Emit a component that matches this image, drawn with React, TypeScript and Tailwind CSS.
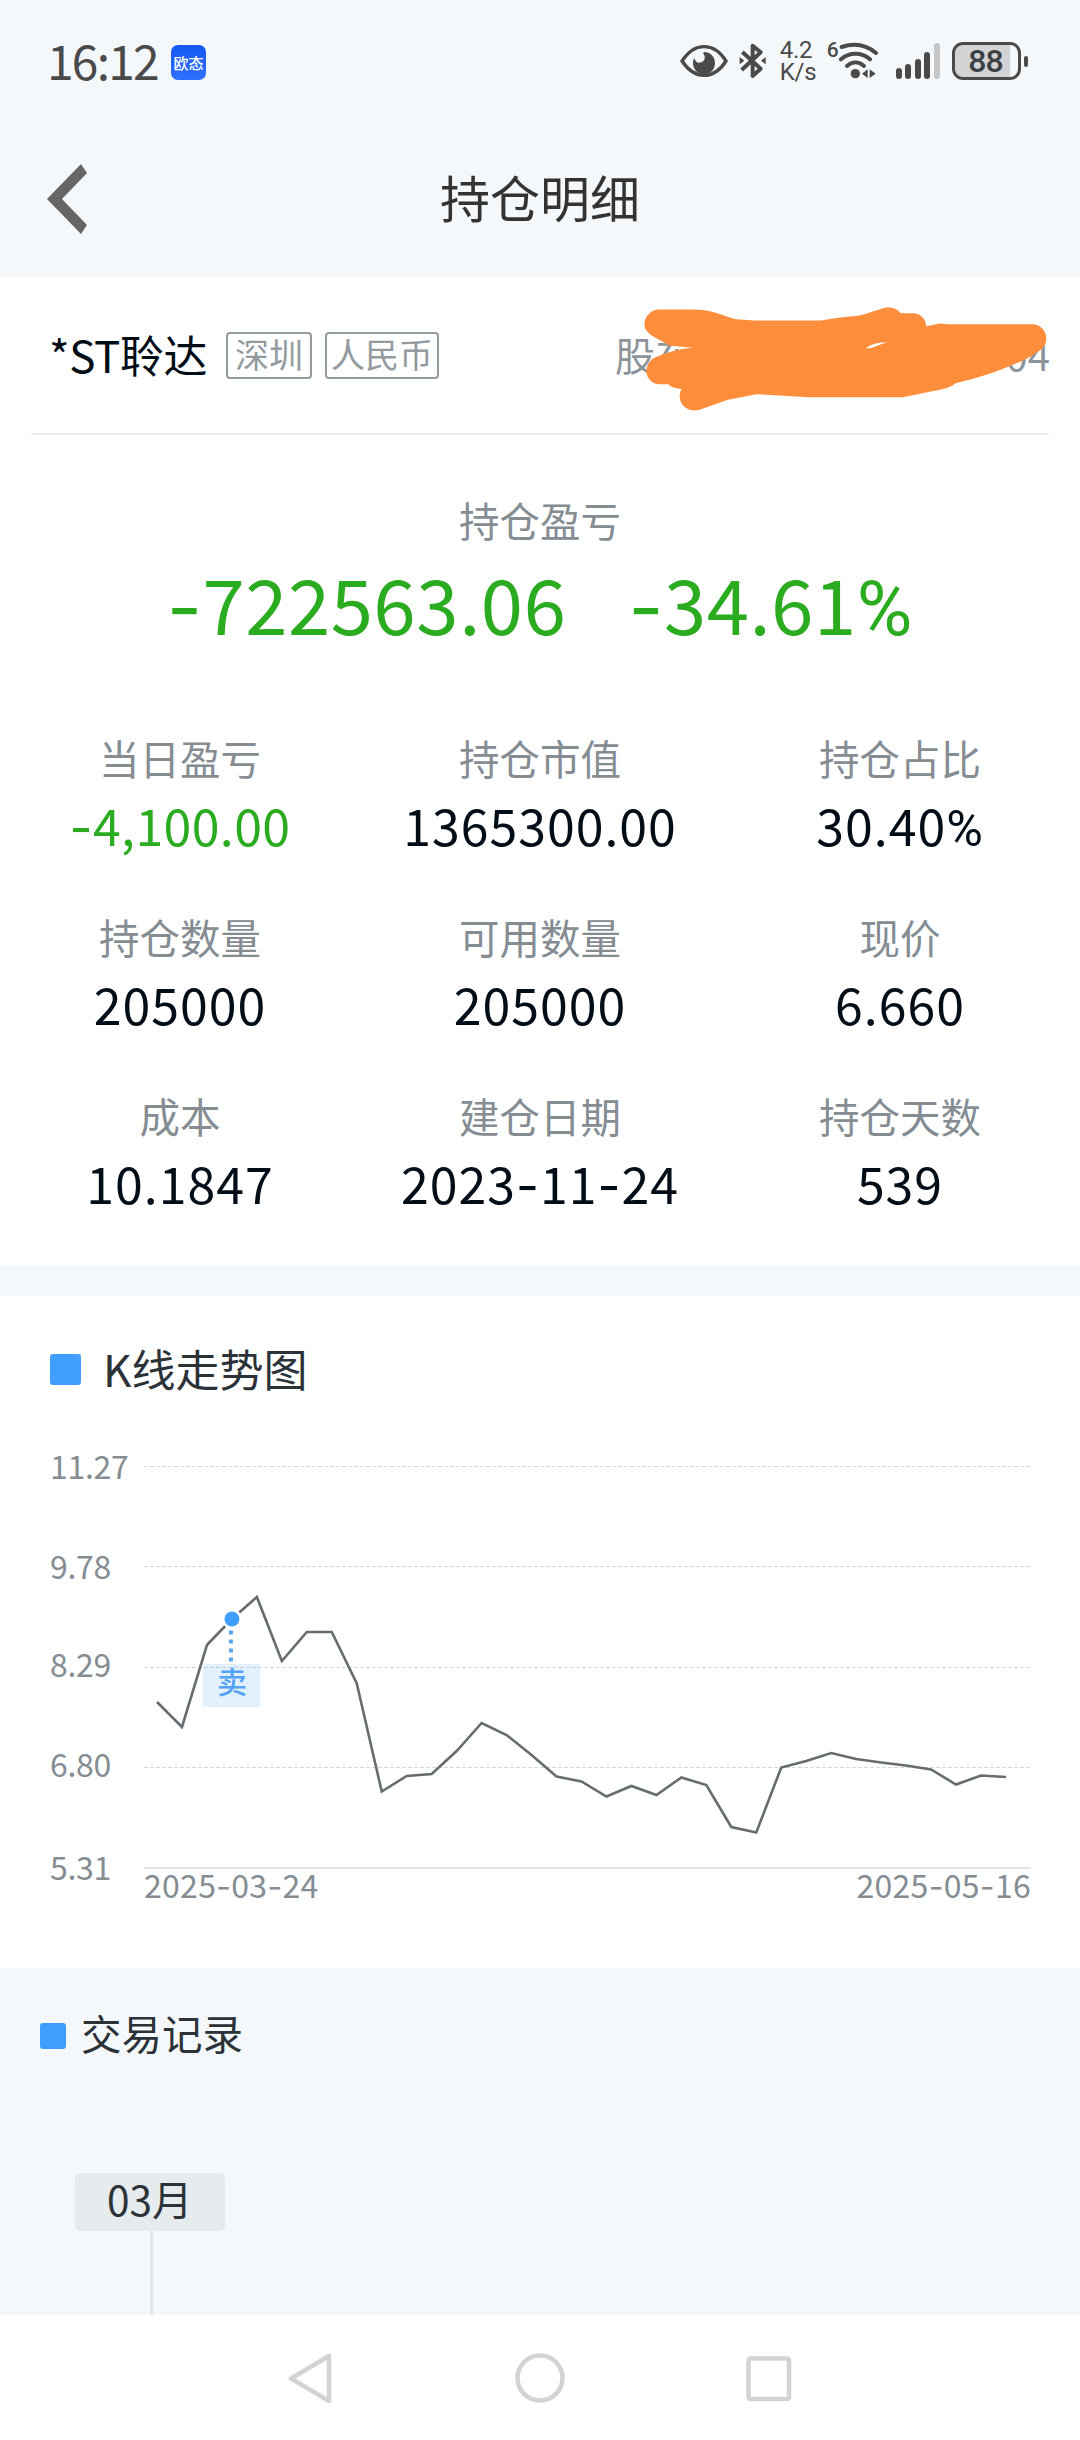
type Metric = {
  label: string;
  value: string;
  valueClass?: string;
};

const METRICS: Metric[] = [
  { label: "当日盈亏", value: "-4,100.00", valueClass: "tracking-[0.4px] text-[#2bab1f]" },
  { label: "持仓市值", value: "1365300.00" },
  { label: "持仓占比", value: "30.40%" },
  { label: "持仓数量", value: "205000" },
  { label: "可用数量", value: "205000" },
  { label: "现价", value: "6.660" },
  { label: "成本", value: "10.1847" },
  { label: "建仓日期", value: "2023-11-24" },
  { label: "持仓天数", value: "539" },
];

const Y_LABELS = [
  { text: "11.27", height: "h-[100px]" },
  { text: "9.78", height: "h-[98px]" },
  { text: "8.29", height: "h-[100px]" },
  { text: "6.80", height: "h-[103px]" },
  { text: "5.31", height: "h-[32px]" },
];

// y offsets inside the plot, one per trading day
const CLOSES = [
  242, 267, 185, 159, 137, 201, 172, 172, 223.5, 331.5, 316, 314, 291, 263, 275,
  295, 316.5, 321.5, 336.5, 326, 335, 317.5, 325, 367, 372.5, 307.5, 301, 293,
  299, 302.5, 305.5, 309.5, 324.5, 315.5, 317,
];
const STEP = 24.97;
const FIRST_X = 13;

// Wide hyphens and a narrow percent sign for figures
function Num({ children }: { children: string }) {
  return (
    <span>
      {children.split(/([-%])/).map((part, i) => {
        if (part === "-") {
          return (
            <span key={i} className="font-['Inter']">
              -
            </span>
          );
        }
        if (part === "%") {
          return (
            <span key={i} className="font-['Roboto']">
              %
            </span>
          );
        }
        return part;
      })}
    </span>
  );
}

function StatusBar() {
  return (
    <div className="flex h-[122px] items-center justify-between pr-[52px] pl-[47px] text-[#4a4a4a]">
      <div className="flex items-center">
        <span className="-mt-1 w-[124px] text-[48px] leading-none tracking-[-1.8px]">
          16:12
        </span>
        <span className="mt-[2px] flex h-[35px] w-[35px] items-center justify-center rounded-[7px] bg-linear-to-b from-[#1558f0] to-[#2f70ff] text-[15px] leading-none font-medium text-white">
          欧态
        </span>
      </div>
      <div className="flex items-center">
        <svg className="h-[36px] w-[48px]" viewBox="60 67 144 108" fill="none">
          <path
            d="M66 121C84 94 106 78 132 78s49 16 66 43c-17 27-40 43-66 43s-48-16-66-43z"
            stroke="currentColor"
            strokeWidth="10"
          />
          <path
            d="M132 94c18 0 33 14 33 33 0 20-15 34-33 34s-33-14-33-34c0-6 1-10 4-15 2 12 12 17 21 13 10-4 13-16 8-23-2-3-3-6 0-8z"
            fill="currentColor"
          />
        </svg>
        <svg className="ml-[11px] h-[38px] w-[28px]" viewBox="236 65 84 114">
          <path
            d="M246 95l55 50-24 22V76l24 20-57 53"
            fill="none"
            stroke="currentColor"
            strokeWidth="12"
            strokeLinejoin="round"
          />
          <path d="M238 110l14 11-14 11zM316 110l-14 11 14 11z" fill="currentColor" />
        </svg>
        <div className="-mt-px ml-[13px] w-[39px] font-['Roboto'] text-[24px] leading-[22px] tracking-[-0.2px]">
          4.2
          <br />
          K/s
        </div>
        <span className="mb-[21px] ml-[8px] w-[12px] font-['Roboto'] text-[21px] leading-none font-medium">
          6
        </span>
        <svg className="h-[38px] w-[40px]" viewBox="533 65 120 114">
          <g fill="none" stroke="currentColor" strokeWidth="12" strokeLinecap="round">
            <path d="M541 80c36-12 72-8 103 18" />
            <path d="M539 117c26-22 61-22 87 0" />
            <path d="M557 137c16-14 35-14 51 0" />
          </g>
          <circle cx="582" cy="160" r="14" fill="currentColor" />
          <path d="M602 160l17-13v26zM643 160l-18-13v26z" fill="currentColor" />
        </svg>
        <div className="ml-[17px] flex h-[36px] items-end gap-[3.6px]">
          <i className="h-[11px] w-[6px] rounded-full bg-[#4a4a4a]" />
          <i className="h-[15px] w-[6px] rounded-full bg-[#4a4a4a]" />
          <i className="h-[20px] w-[6px] rounded-full bg-[#4a4a4a]" />
          <i className="h-[27px] w-[6px] rounded-full bg-[#4a4a4a]" />
          <i className="h-[36px] w-[6px] rounded-full bg-[#c4c6c8]" />
        </div>
        <div className="ml-[12px] flex items-center gap-[3px]">
          <div className="flex h-[38px] w-[69px] items-center justify-center rounded-[11px] border-[3px] border-[#4a4a4a] bg-linear-to-r from-[#d1d3d5] from-87% to-[#f4f8fb] to-87% pr-[2px] font-['Roboto'] text-[32px] leading-none font-medium tracking-[-1px] text-[#3c4043]">
            88
          </div>
          <i className="h-[11px] w-[4px] rounded-full bg-[#4a4a4a]" />
        </div>
      </div>
    </div>
  );
}

function NavHeader() {
  return (
    <header className="flex h-[155px] items-center pb-[3px]">
      <svg className="mt-px ml-[47px] h-[70px] w-[40px]" viewBox="0 0 40 70" fill="#666">
        <path d="M34 0l6 9-25 26 25 26-6 9L0 35z" />
      </svg>
      <h1 className="mr-[87px] -mt-[5px] flex-1 text-center text-[50px] leading-none text-[#333]">
        持仓明细
      </h1>
    </header>
  );
}

function Scribble() {
  return (
    <svg
      className="absolute top-[29px] left-[28px] h-[107px] w-[405px]"
      viewBox="160 75 1215 320"
      fill="#ff8e3c"
      fillRule="evenodd"
    >
      <path d="M205 85H310C370 85 400 105 440 114L495 118H695C740 110 770 107 805 104C840 96 865 84 890 79C910 77 925 85 933 96H970C992 97 1008 112 1010 135L1050 127L1075 129H1330C1355 131 1370 150 1370 172C1370 200 1350 207 1330 222C1250 265 1170 290 1098 306C1080 322 1050 325 1035 329L940 348H655L500 339L415 356L330 386C300 395 270 375 270 345C270 335 272 328 277 324C260 322 245 318 235 309H207C185 307 170 290 170 268C172 240 190 230 205 225C240 212 270 203 310 200L240 194L195 168C175 158 164 145 164 128C165 105 185 86 205 85ZM828 202C842 190 862 182 895 184C872 187 852 203 828 202Z" />
    </svg>
  );
}

function StockRow() {
  return (
    <div className="mr-[31px] ml-[31px] flex h-[158px] items-center border-b-2 border-[#ededed] pl-[18px]">
      <span className="-mt-[2px] w-[177px] text-[44px] leading-none tracking-[-0.4px] whitespace-nowrap text-[#020d18]">
        *ST聆达
      </span>
      <span className="flex h-[47px] w-[86px] items-center justify-center rounded-[4px] border-2 border-[#939ba1] pb-[3px] text-[34px] leading-none text-[#939ba1]">
        深圳
      </span>
      <span className="ml-[13px] flex h-[47px] w-[114px] items-center justify-center rounded-[4px] border-2 border-[#939ba1] pb-[3px] text-[34px] leading-none text-[#939ba1]">
        人民币
      </span>
      <div className="relative -mr-px ml-auto flex h-full w-[435px] items-center justify-between pb-[2px] text-[40px] leading-none text-[#8d959b]">
        <span>股东</span>
        <span>04</span>
        <Scribble />
      </div>
    </div>
  );
}

function Summary() {
  return (
    <section className="h-[988px] bg-white">
      <StockRow />
      <div className="pt-[63px] text-center">
        <div className="text-[40.5px] leading-[44px] text-[#858d93]">持仓盈亏</div>
        <div className="mt-[18px] flex h-[84px] justify-center gap-[62px] text-[76px] leading-[84px] tracking-[0.6px] text-[#2bab1f]">
          <Num>-722563.06</Num>
          <Num>-34.61%</Num>
        </div>
      </div>
      <div className="mt-[92px] grid grid-cols-3 text-center">
        {METRICS.map((m) => (
          <div key={m.label} className="h-[179px]">
            <div className="text-[40.5px] leading-[44px] text-[#858d93]">{m.label}</div>
            <div
              className={`mt-[18px] text-[50px] leading-[52px] ${m.valueClass ?? "tracking-[1px] text-[#020d18]"}`}
            >
              <Num>{m.value}</Num>
            </div>
          </div>
        ))}
      </div>
    </section>
  );
}

function TrendChart() {
  const points = CLOSES.map((y, i) => `${FIRST_X + i * STEP},${y}`).join(" ");
  const soldX = FIRST_X + 3 * STEP;

  return (
    <section className="mt-[31px] h-[672px] bg-white pl-[50px]">
      <div className="flex items-center pt-[50px]">
        <i className="h-[31px] w-[31px] rounded-[3px] bg-[#409eff]" />
        <h2 className="-mt-[2px] ml-[22px] text-[44px] leading-[48px] text-[#2b3238]">
          K线走势图
        </h2>
      </div>
      <div className="mt-[57px] flex text-[32px] leading-8 text-[#858d93]">
        <div className="w-[94px] tracking-[-0.3px]">
          {Y_LABELS.map((l) => (
            <div key={l.text} className={l.height}>
              {l.text}
            </div>
          ))}
        </div>
        <div className="w-[887px] pt-[11px]">
          <svg className="block h-[410px] w-[887px]" viewBox="0 0 887 410" fill="none">
            {[6.5, 106.5, 207.5, 307.5].map((y) => (
              <path key={y} d={`M0 ${y}H887`} stroke="#d3d8da" strokeDasharray="4 2" />
            ))}
            <path d="M0 408H887" stroke="#e1e4e5" strokeWidth="2" />
            <polyline points={points} stroke="#666c70" strokeWidth="2.6" />
            <circle cx={soldX} cy="159" r="10" fill="#fff" />
            <circle cx={soldX} cy="159" r="7.5" fill="#409eff" />
            <path d={`M${soldX - 1} 170.5V202`} stroke="#5aa5ee" strokeWidth="4" strokeDasharray="4 5" />
            <rect x="59" y="204" width="57" height="43" fill="#409eff" fillOpacity="0.15" />
            <text x={soldX} y="233" textAnchor="middle" fontSize="30" fontWeight="500" fill="#54a3f5">
              卖
            </text>
          </svg>
          <div className="-mt-[2px] flex h-8 justify-between tracking-[0.3px]">
            <Num>2025-03-24</Num>
            <Num>2025-05-16</Num>
          </div>
        </div>
      </div>
    </section>
  );
}

function TradeRecords() {
  return (
    <section className="h-[347px] text-[#2b3238]">
      <div className="flex items-center pt-[45px] pl-[40px]">
        <i className="mt-[3px] h-[26px] w-[26px] rounded-[3px] bg-[#409eff]" />
        <h2 className="-mt-[3px] ml-[15px] text-[40.5px] leading-[46px]">交易记录</h2>
      </div>
      <div className="mt-[117px] ml-[75px] w-[150px]">
        <div className="h-[58px] rounded-[5px] bg-[#e6ebee] pl-[32px] text-[40.5px] leading-[52px]">
          03月
        </div>
        <div className="ml-[75px] h-[84px] w-[3px] bg-[#e3e7e9]" />
      </div>
    </section>
  );
}

function SystemNav() {
  return (
    <nav className="flex h-[125px] items-center justify-center bg-white">
      <svg className="h-[50px] w-[504px]" viewBox="288 0 504 50" fill="none" stroke="#d3d3d3" strokeWidth="4.5">
        <path d="M291 25.5L329 3V48z" strokeLinejoin="round" />
        <circle cx="540" cy="25" r="22.5" />
        <rect x="748.5" y="5.5" width="40.5" height="40.5" rx="2" />
      </svg>
    </nav>
  );
}

export default function App() {
  return (
    <div className="h-[2440px] w-[1080px] overflow-hidden bg-[#f4f8fb] font-['Noto_Sans_CJK_SC',sans-serif]">
      <StatusBar />
      <NavHeader />
      <Summary />
      <TrendChart />
      <TradeRecords />
      <SystemNav />
    </div>
  );
}
